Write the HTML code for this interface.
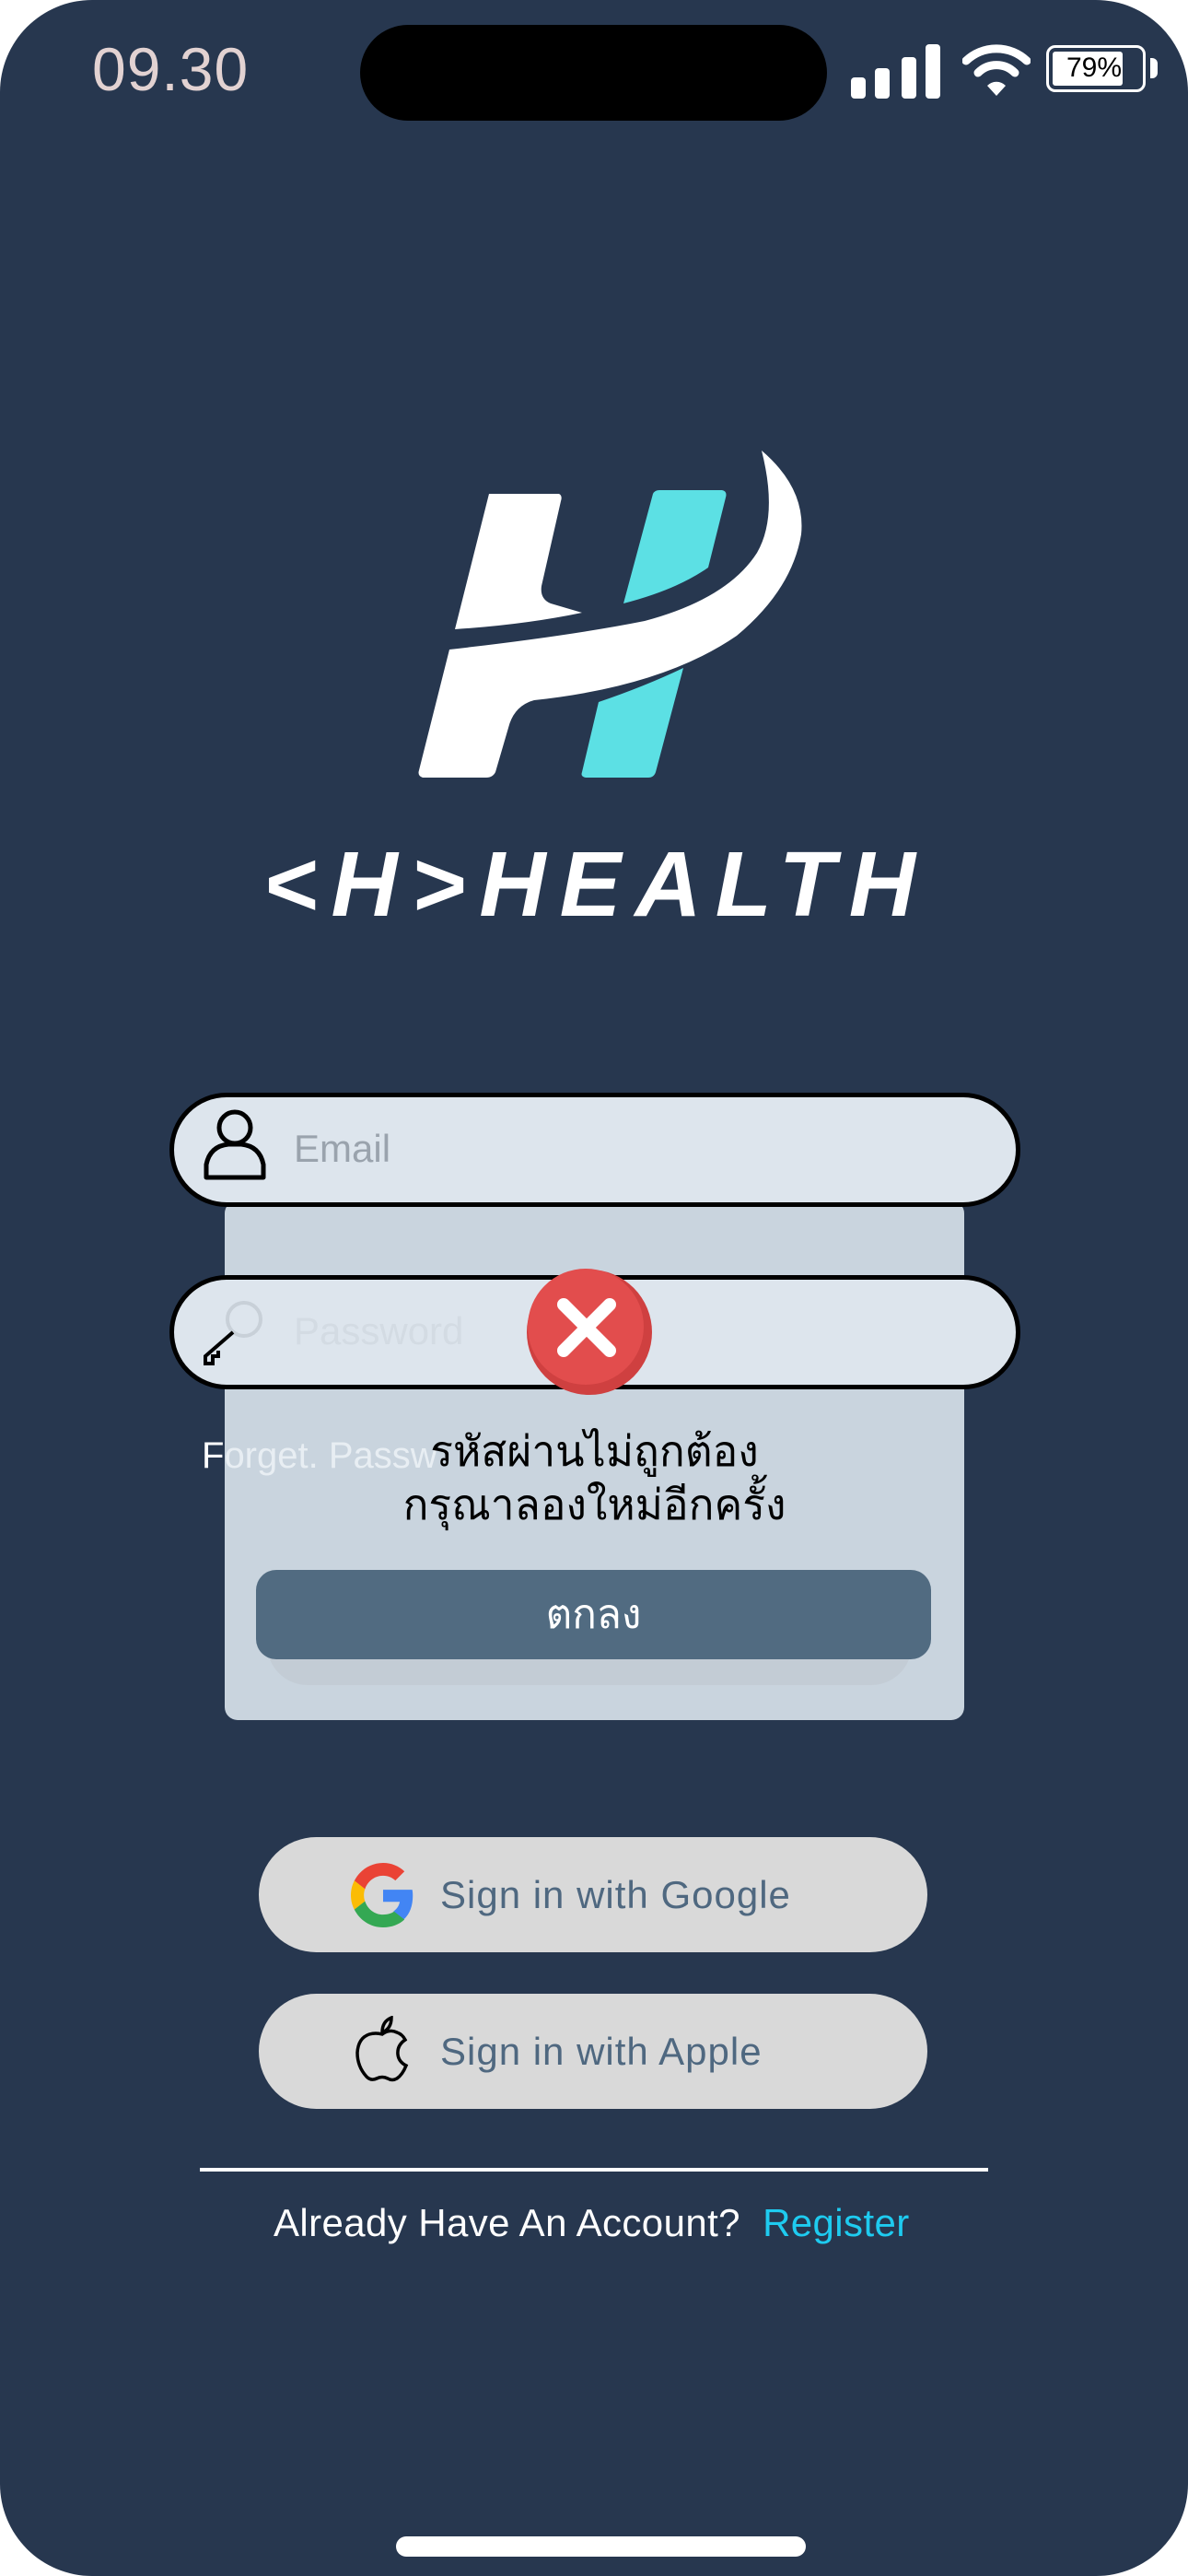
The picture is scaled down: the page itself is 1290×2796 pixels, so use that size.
<!DOCTYPE html>
<html><head><meta charset="utf-8"><style>
html,body{margin:0;padding:0;background:#fff}
body{width:1290px;height:2796px;position:relative;overflow:hidden;font-family:"Liberation Sans","Noto Sans CJK SC",sans-serif}
.scr{position:absolute;left:0;top:0;width:1290px;height:2796px;background:#27374f;border-radius:100px}
.a{position:absolute}
.field{position:absolute;left:184px;width:914px;height:114px;border:5px solid #000;border-radius:62px;background:#dde5ed}
.pill{position:absolute;left:281px;width:726px;height:125px;border-radius:63px;background:#d9d9d9}
.pill span{position:absolute;left:197px;top:0;line-height:125px;font-size:42px;letter-spacing:1px;color:#4f6880}
</style></head><body>
<div class="scr">
<div class="a" style="left:100px;top:40px;font-size:66px;color:#e2d2d2;line-height:70px;letter-spacing:1px">09.30</div>
<div class="a" style="left:391px;top:27px;width:507px;height:104px;border-radius:52px;background:#000"></div>
<div class="a" style="left:924px;top:84px;width:16px;height:23px;background:#fff;border-radius:4px"></div>
<div class="a" style="left:950px;top:74px;width:16px;height:33px;background:#fff;border-radius:4px"></div>
<div class="a" style="left:979px;top:62px;width:16px;height:45px;background:#fff;border-radius:4px"></div>
<div class="a" style="left:1005px;top:48px;width:16px;height:59px;background:#fff;border-radius:4px"></div>
<svg class="a" style="left:1045px;top:46px" width="74" height="60" viewBox="0 0 74 60"><path d="M4 20 A48 48 0 0 1 70 20" stroke="#fff" stroke-width="9" fill="none" stroke-linecap="round"/><path d="M17 33 A28 28 0 0 1 57 33" stroke="#fff" stroke-width="9" fill="none" stroke-linecap="round"/><path d="M37 58 L27 47 A14 14 0 0 1 47 47 Z" fill="#fff"/></svg>
<div class="a" style="left:1136px;top:49px;width:102px;height:45px;border:3px solid #fff;border-radius:10px"></div>
<div class="a" style="left:1143px;top:56px;width:76px;height:37px;background:#fff;border-radius:3px"></div>
<div class="a" style="left:1143px;top:54px;width:90px;text-align:center;font-size:30px;line-height:40px;color:#000">79%</div>
<div class="a" style="left:1249px;top:63px;width:8px;height:22px;background:#fff;border-radius:0 6px 6px 0"></div>
<svg class="a" style="left:0;top:0" width="1290" height="1100">
<path d="M531 536 L607 536 Q611 538 609 544 L588 636 Q586 650 598 655 L632 665 Q570 678 494 683 Z" fill="#fff"/>
<path d="M488 705 Q620 690 700 674 Q790 650 822 600 Q845 560 827 489 Q875 530 870 580 Q860 640 800 690 Q720 745 580 760 Q558 766 552 790 L538 838 Q535 844 528 844 L459 844 Q453 842 455 836 Z" fill="#fff"/>
<path d="M709 536 Q711 532 716 532 L784 532 Q790 533 788 540 L769 616 Q735 640 677 655 Z" fill="#5ce0e4"/>
<path d="M650 762 Q700 745 742 725 L712 838 Q710 844 704 844 L636 844 Q630 843 632 838 Z" fill="#5ce0e4"/>
<text x="286" y="994" textLength="708" lengthAdjust="spacing" font-family="Liberation Sans" font-weight="bold" font-style="italic" font-size="100" fill="#fff">&lt;H&gt;HEALTH</text>
</svg>
<div class="a" style="left:244px;top:1303px;width:803px;height:564px;background:#c9d4de;border-radius:14px"></div>
<div class="field" style="top:1186px"></div>
<svg class="a" style="left:220px;top:1202px" width="70" height="80" viewBox="0 0 70 80"><circle cx="35" cy="22" r="17" fill="none" stroke="#000" stroke-width="5"/><path d="M4 76 L4 62 Q8 42 28 40 L42 40 Q62 42 66 62 L66 76 Z" fill="none" stroke="#000" stroke-width="5" stroke-linejoin="round"/></svg>
<div class="a" style="left:319px;top:1222px;font-size:42px;line-height:50px;color:#9aa3ad">Email</div>
<div class="field" style="top:1384px"></div>
<svg class="a" style="left:215px;top:1410px" width="75" height="72" viewBox="0 0 75 72"><circle cx="50" cy="22" r="18" fill="none" stroke="#c8d0d8" stroke-width="4"/><path d="M38 36 L8 62 L8 70 L16 70 L16 62 L22 62 L22 56" fill="none" stroke="#000" stroke-width="4"/></svg>
<div class="a" style="left:319px;top:1420px;font-size:42px;line-height:50px;color:#d3dbe3">Password</div>
<div class="a" style="left:219px;top:1555px;font-size:40px;line-height:50px;color:#e8eef3"><span style="color:#fff">F</span>orget. Passw</div>
<svg class="a" style="left:570px;top:1376px" width="140" height="140" viewBox="0 0 140 140"><circle cx="70" cy="70" r="68" fill="#cf4040"/><circle cx="66" cy="64" r="63" fill="#e24d4d"/><path d="M42 40 L92 90 M92 40 L42 90" stroke="#fff" stroke-width="14" stroke-linecap="round"/></svg>
<div class="a" style="left:244px;top:1546px;width:803px;text-align:center;font-size:46px;line-height:58px;color:#000">รหัสผ่านไม่ถูกต้อง<br>กรุณาลองใหม่อีกครั้ง</div>
<div class="a" style="left:290px;top:1740px;width:700px;height:89px;background:#c3ccd5;border-radius:44px"></div>
<div class="a" style="left:278px;top:1704px;width:733px;height:97px;background:#516b81;border-radius:22px;text-align:center;line-height:97px;font-size:44px;color:#fff">ตกลง</div>
<div class="pill" style="top:1994px"><span>Sign in with Google</span>
<svg class="a" style="left:100px;top:28px" width="70" height="70" viewBox="0 0 48 48"><path fill="#EA4335" d="M24 9.5c3.5 0 6.6 1.2 9.1 3.6l6.8-6.8C35.8 2.4 30.2 0 24 0 14.6 0 6.6 5.4 2.6 13.3l7.9 6.2C12.4 13.7 17.7 9.5 24 9.5z"/><path fill="#4285F4" d="M46.1 24.5c0-1.6-.1-3.1-.4-4.5H24v9h12.4c-.5 2.9-2.2 5.4-4.7 7.1l7.7 6C43.9 38 46.1 31.800 46.1 24.5z"/><path fill="#FBBC05" d="M10.5 28.6c-.5-1.4-.8-3-.8-4.6s.3-3.2.8-4.6l-7.9-6.2C.9 16.5 0 20.1 0 24s.9 7.5 2.6 10.8l7.9-6.2z"/><path fill="#34A853" d="M24 48c6.5 0 11.9-2.1 15.9-5.8l-7.7-6c-2.2 1.5-5 2.3-8.2 2.3-6.3 0-11.6-4.2-13.5-10l-7.9 6.2C6.6 42.6 14.6 48 24 48z"/></svg></div>
<div class="pill" style="top:2164px"><span>Sign in with Apple</span>
<svg class="a" style="left:104px;top:24px" width="60" height="72" viewBox="0 0 60 72"><path d="M30 20 Q38 14 46 18 Q52 20 55 26 Q46 32 47 42 Q48 50 56 54 Q52 64 46 68 Q41 71 36 68 Q30 65 24 68 Q18 71 13 66 Q3 55 3 40 Q4 24 16 20 Q23 18 30 20 Z" fill="none" stroke="#000" stroke-width="3.5"/><path d="M30 18 Q30 6 40 2 Q40 14 30 18 Z" fill="none" stroke="#000" stroke-width="3.5"/></svg></div>
<div class="a" style="left:217px;top:2353px;width:856px;height:4px;background:#fff"></div>
<div class="a" style="left:297px;top:2386px;font-size:42px;letter-spacing:0.4px;line-height:54px;color:#fff;white-space:nowrap">Already Have An Account?&nbsp; <span style="color:#1ecbf0">Register</span></div>
<div class="a" style="left:430px;top:2753px;width:445px;height:22px;background:#fff;border-radius:11px"></div>
</div>
</body></html>
